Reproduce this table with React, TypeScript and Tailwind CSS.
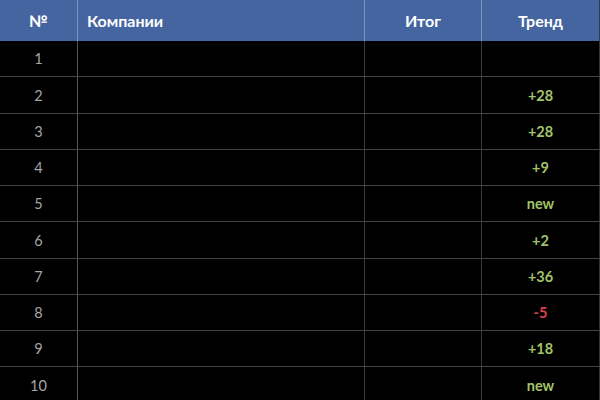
const rows: { n: number; trend: string }[] = [
  { n: 1, trend: "" },
  { n: 2, trend: "+28" },
  { n: 3, trend: "+28" },
  { n: 4, trend: "+9" },
  { n: 5, trend: "new" },
  { n: 6, trend: "+2" },
  { n: 7, trend: "+36" },
  { n: 8, trend: "-5" },
  { n: 9, trend: "+18" },
  { n: 10, trend: "new" },
];

export default function App() {
  return (
    <div
      className="w-[600px] h-[400px] overflow-hidden bg-black"
      style={{ fontFamily: "Lato, 'Open Sans', sans-serif" }}
    >
      <div className="grid grid-cols-[78px_287px_117px_117px_1px] h-[41px] bg-[#4465a0] text-white font-bold text-[16px]">
        <div className="flex items-center justify-center border-r border-[#7b93bf]">№</div>
        <div className="flex items-center pl-[9px] border-r border-[#7b93bf]">Компании</div>
        <div className="flex items-center justify-center border-r border-[#7b93bf]">Итог</div>
        <div className="flex items-center justify-center">Тренд</div>
        <div className="bg-[#2a3a5a]" />
      </div>
      {rows.map((r) => (
        <div
          key={r.n}
          className="grid grid-cols-[78px_287px_117px_117px_1px] h-[36.25px] border-b border-[#444444] text-[14.5px]"
        >
          <div className="flex items-center justify-center pt-px text-[#a6a6a6] border-r border-[#555555]">
            {r.n}
          </div>
          <div className="border-r border-[#3a3a3a]" />
          <div className="border-r border-[#3a3a3a]" />
          <div
            className={
              "flex items-center justify-center pt-px font-bold " +
              (r.trend.startsWith("-") ? "text-[#e0404e]" : "text-[#a2c36a]")
            }
          >
            {r.trend}
          </div>
          <div className="bg-[#333333]" />
        </div>
      ))}
    </div>
  );
}
